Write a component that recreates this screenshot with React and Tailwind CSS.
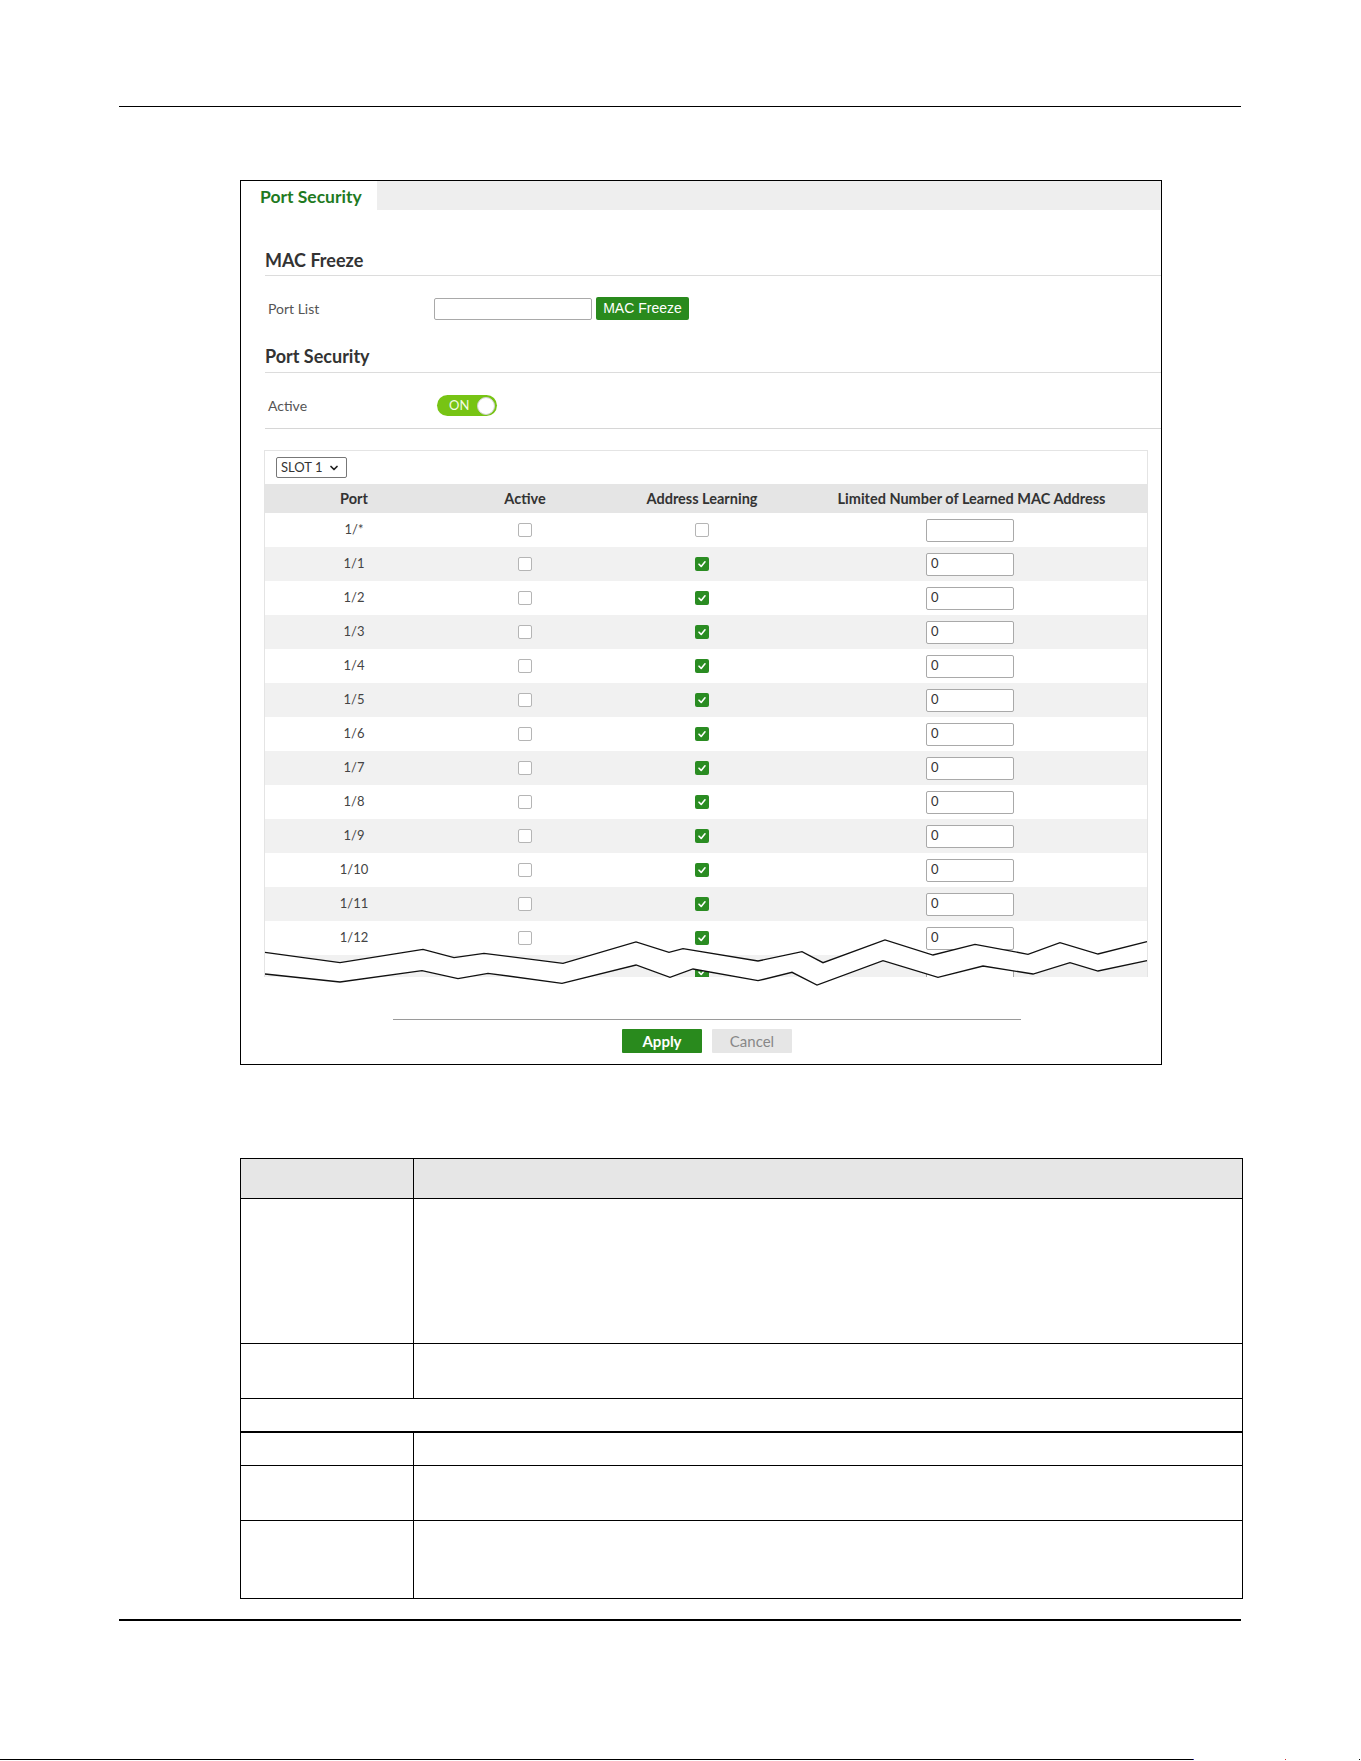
import React from 'react';
import { ChevronDown } from 'lucide-react';

const ui = { fontFamily: 'Lato, "Liberation Sans", Arial, sans-serif' };
const arial = { fontFamily: '"Liberation Sans", Arial, sans-serif' };

const ports = ['1/*', '1/1', '1/2', '1/3', '1/4', '1/5', '1/6', '1/7', '1/8', '1/9', '1/10', '1/11', '1/12', ''];

const topEdge = [
  [1, 17.3], [76, 27.7], [159, 14.3], [190, 22.7], [220, 18.3], [299, 28.3], [372, 7], [405, 17.3], [419, 13.7],
  [494, 26], [538, 16.7], [559, 27.7], [621, 5], [669, 20], [711, 9.3], [764, 19.3], [796, 7.7], [834, 19], [883, 6.7],
];
const bottomEdge = [
  [1, 39], [76, 47], [158, 35.7], [194, 43.7], [224, 38.3], [298, 48.3], [372, 30], [406, 42.3], [429, 34],
  [494, 45.7], [528, 37.3], [553, 50], [619, 25.7], [674, 42.3], [719, 31], [769, 39], [806, 27.7], [834, 36], [883, 25.7],
];
const pts = (list) => list.map(([x, y]) => `${x},${y}`).join(' ');

const Box = ({ checked }) =>
  checked ? (
    <span className="flex h-[14px] w-[14px] items-center justify-center rounded-[2px] bg-[#2a8c22]">
      <svg width="10" height="10" viewBox="0 0 10 10">
        <polyline points="2,5.2 4.2,7.4 8,2.8" fill="none" stroke="#fff" strokeWidth="1.6" strokeLinecap="round" strokeLinejoin="round" />
      </svg>
    </span>
  ) : (
    <span className="block h-[14px] w-[14px] rounded-[2px] border border-[#b5b5b5] bg-white" />
  );

const PortRow = ({ port, i }) => {
  const all = i === 0;
  return (
    <div className={`flex h-[34px] items-center text-[13px] text-[#444] ${i % 2 ? 'bg-[#f1f1f1]' : 'bg-white'}`}>
      <div className="w-[178px] text-center">{port}</div>
      <div className="flex w-[164px] justify-center">
        <Box checked={false} />
      </div>
      <div className="flex w-[190px] justify-center">
        <Box checked={!all} />
      </div>
      <div className="flex w-[349px] justify-center">
        <div className="ml-[-3px] flex h-[23px] w-[88px] items-center rounded-[2px] border border-[#a9a9a9] bg-white pl-[4px] text-[13px] text-[#333]">
          {all || !port ? '' : '0'}
        </div>
      </div>
    </div>
  );
};

// torn-edge marks across the cut port list
const TearLines = () => (
  <svg className="absolute left-0 top-[485px]" width="884" height="55" viewBox="0 0 884 55">
    <polygon points={`${pts(topEdge)} ${pts([...bottomEdge].reverse())}`} fill="#fff" />
    <polyline points={pts(topEdge)} fill="none" stroke="#111" strokeWidth="1.3" />
    <polyline points={pts(bottomEdge)} fill="none" stroke="#111" strokeWidth="1.3" />
  </svg>
);

const PortSecurityPanel = () => (
  <div className="ml-[240px] mt-[73px] h-[885px] w-[922px] border border-black" style={ui}>
    <div className="flex h-[29px] bg-[#eeeeee]">
      <div className="flex w-[136px] items-center bg-white pl-[19px] pt-[3px] text-[17.5px] font-bold text-[#1f7a1f]">Port Security</div>
    </div>

    <div className="pl-[24px]">
      <div className="mt-[38px] h-[28px] border-b border-[#dcdcdc] text-[18px] font-bold leading-[24px] text-[#333]">MAC Freeze</div>
      <div className="mt-[21px] flex h-[23px] items-center">
        <div className="w-[169px] pl-[3px] text-[14px] text-[#555]">Port List</div>
        <div className="h-[22px] w-[158px] rounded-[2px] border border-[#a9a9a9] bg-white" />
        <button className="ml-[4px] h-[23px] w-[93px] rounded-[2px] bg-[#298a1d] text-[14px] text-white" style={arial}>
          MAC Freeze
        </button>
      </div>

      <div className="mt-[24px] h-[29px] border-b border-[#dcdcdc] text-[18px] font-bold leading-[24px] text-[#333]">Port Security</div>
      <div className="mt-[22px] flex h-[21px] items-center">
        <div className="w-[172px] pl-[3px] text-[14px] text-[#555]">Active</div>
        <div className="flex h-[21px] w-[60px] items-center justify-between rounded-full bg-[#77c414] pl-[12px] pr-[2px]">
          <span className="text-[13px] text-[#f4fbe4]">ON</span>
          <span className="h-[18px] w-[18px] rounded-full border border-[#d0d0d0] bg-white" />
        </div>
      </div>
      <div className="mt-[12px] h-px bg-[#d6d6d6]" />
    </div>

    <div className="relative ml-[23px] mt-[21px] w-[884px]">
      <div className="h-[527px] overflow-hidden border-x border-t border-[#e4e4e4]">
        <div className="h-[33px] pl-[11px] pt-[6px]">
          <div className="flex h-[21px] w-[71px] items-center justify-between rounded-[2px] border border-[#777] pl-[4px] pr-[6px] text-[13px] text-[#333]">
            <span>SLOT 1</span>
            <ChevronDown size={12} strokeWidth={3.5} color="#222" />
          </div>
        </div>
        <div className="flex h-[29px] items-center bg-[#e5e5e5] text-[14.5px] font-bold text-[#333]">
          <div className="w-[178px] text-center">Port</div>
          <div className="w-[164px] text-center">Active</div>
          <div className="w-[190px] text-center">Address Learning</div>
          <div className="w-[349px] text-center">Limited Number of Learned MAC Address</div>
        </div>
        {ports.map((p, i) => (
          <PortRow key={i} port={p} i={i} />
        ))}
      </div>
      <TearLines />
    </div>

    <div className="ml-[152px] mt-[42px] h-px w-[628px] bg-[#9a9a9a]" />
    <div className="ml-[381px] mt-[9px] flex gap-[10px]">
      <button className="h-[24px] w-[80px] rounded-[1px] bg-[#298a1d] text-[15px] font-bold text-white">Apply</button>
      <button className="h-[24px] w-[80px] rounded-[1px] bg-[#e6e6e6] text-[15px] text-[#888]">Cancel</button>
    </div>
  </div>
);

const FieldTable = () => (
  <div className="ml-[240px] mt-[93px] w-[1003px] border border-black">
    <div className="flex h-[40px] border-b border-black bg-[#e6e6e6]">
      <div className="w-[173px] border-r border-black" />
      <div className="flex-1" />
    </div>
    <div className="flex h-[145px] border-b border-black">
      <div className="w-[173px] border-r border-black" />
      <div className="flex-1" />
    </div>
    <div className="flex h-[55px] border-b border-black">
      <div className="w-[173px] border-r border-black" />
      <div className="flex-1" />
    </div>
    <div className="h-[34px] border-b-2 border-black" />
    <div className="flex h-[33px] border-b border-black">
      <div className="w-[173px] border-r border-black" />
      <div className="flex-1" />
    </div>
    <div className="flex h-[55px] border-b border-black">
      <div className="w-[173px] border-r border-black" />
      <div className="flex-1" />
    </div>
    <div className="flex h-[77px]">
      <div className="w-[173px] border-r border-black" />
      <div className="flex-1" />
    </div>
  </div>
);

export default function App() {
  return (
    <div className="h-[1761px] w-[1361px] overflow-hidden bg-white pt-[106px]">
      <div className="ml-[119px] h-px w-[1122px] bg-black" />
      <PortSecurityPanel />
      <FieldTable />
      <div className="ml-[119px] mt-[20px] h-[2px] w-[1122px] bg-black" />
      <div className="mt-[138px] flex h-px items-start">
        <div className="h-px w-[1193px] bg-black" />
        <div className="h-px w-px bg-[#2b2bd0]" />
        <div className="ml-[91px] h-px w-px bg-[#d02b2b]" />
        <div className="ml-[73px] h-px w-px bg-black" />
      </div>
    </div>
  );
}
